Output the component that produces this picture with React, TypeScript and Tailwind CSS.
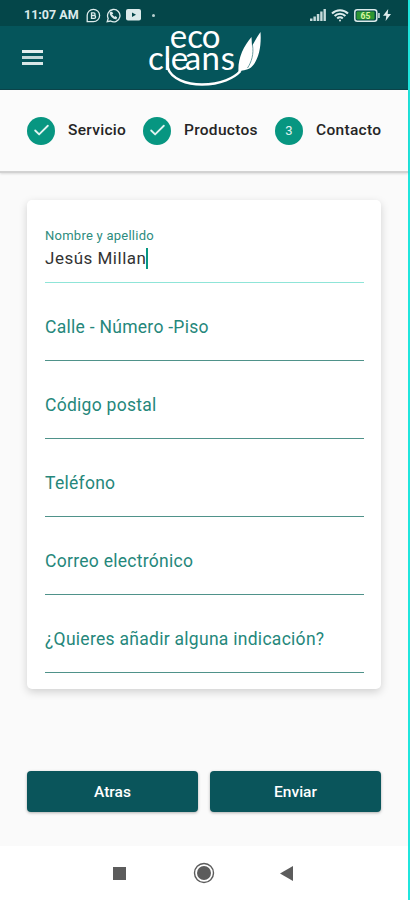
import { Check } from 'lucide-react';

const steps = [
  { label: 'Servicio', done: true, width: 'w-[116px]' },
  { label: 'Productos', done: true, width: 'w-[132px]' },
  { label: 'Contacto', done: false, width: '' },
];

const fields = [
  'Calle - Número -Piso',
  'Código postal',
  'Teléfono',
  'Correo electrónico',
  '¿Quieres añadir alguna indicación?',
];

const StatusBar = () => (
  <div className="flex h-[26px] items-center bg-[#044649] pl-6 pr-[17px] pt-1 text-[#dcebeb]">
    <span className="w-[57px] whitespace-nowrap text-[12.5px] font-bold leading-none">11:07 AM</span>
    <svg className="ml-[5px]" width="15" height="15" viewBox="0 0 15 15" fill="none" stroke="currentColor" strokeWidth="1.3">
      <path d="M1.2 13.5V7.5a6.2 6.2 0 1 1 6.2 6.2H1.2z" />
      <path d="M5.5 4.8h2.2a1.3 1.3 0 0 1 0 2.7H5.5zM5.5 7.5h2.7a1.3 1.3 0 0 1 0 2.8H5.5z" />
    </svg>
    <svg className="ml-[5px]" width="15" height="15" viewBox="0 0 15 15" fill="none" stroke="currentColor" strokeWidth="1.3">
      <path d="M1.2 13.7l1-3.3A6.2 6.2 0 1 1 4.6 13z" />
      <path d="M5 4.2c-1.2 2 2.8 6.8 5.6 6M5 4.2l1.5 2M10.6 10.2l-1.8-1.5" strokeWidth="2" />
    </svg>
    <svg className="ml-[5px]" width="15" height="12" viewBox="0 0 15 12">
      <rect width="15" height="11.5" rx="2" fill="currentColor" />
      <path d="M6 3.5v4.5l4-2.2z" fill="#044649" />
    </svg>
    <span className="ml-[11px] size-[3px] rounded-full bg-[#b8d0d0]" />
    <svg className="ml-auto" width="17" height="12" viewBox="0 0 17 12" fill="currentColor">
      <path d="M0 9.5h2.5V12H0zM3.4 7.5h2.5V12H3.4zM6.8 5h2.5v7H6.8zM10.2 2.5h2.4V12h-2.4zM13.5 0h2.4v12h-2.4z" opacity=".9" />
    </svg>
    <svg className="ml-1" width="18" height="13" viewBox="0 0 18 13" fill="none" stroke="currentColor" strokeWidth="2.1">
      <path d="M1 4.5a11.5 11.5 0 0 1 16 0M3.6 7a7.7 7.7 0 0 1 10.8 0M6.2 9.5a4 4 0 0 1 5.6 0" />
      <circle cx="9" cy="11.5" r="1" fill="currentColor" stroke="none" />
    </svg>
    <svg className="ml-[5px]" width="26" height="13" viewBox="0 0 26 13">
      <rect x=".8" y=".8" width="22" height="11.4" rx="2.5" fill="none" stroke="currentColor" strokeWidth="1.5" />
      <rect x="2.5" y="2.5" width="18" height="8" rx="1" fill="#2d9632" />
      <path d="M24.2 4h1.5v5h-1.5z" fill="currentColor" />
      <text x="11.5" y="9.6" textAnchor="middle" fontSize="8.5" fontWeight="700" fill="#d6f5a5">65</text>
    </svg>
    <svg className="ml-[3px]" width="8" height="12" viewBox="0 0 8 12" fill="currentColor">
      <path d="M5.2 0L0 6.8h3.3L2.6 12 8 5H4.7z" />
    </svg>
  </div>
);

const Logo = () => (
  <svg className="overflow-visible" width="118" height="64" viewBox="147 26 118 64" fill="none" stroke="white">
    <g fill="white" stroke="none" className="font-[Lato,sans-serif]">
      <text x="169.8 187.3 201.8" y="47.7" fontSize="33">eco</text>
      <text x="148 163.5 170.7 184.7 201.5 220.8" y="69.7" fontSize="33">cleans</text>
    </g>
    <path d="M167.7 58v9.5C171 79 187 84.5 202 84.5C221 84.5 234 78 240.5 71" strokeWidth="2.5" />
    {/* leaf */}
    <path d="M238.5 72.5C237.5 59 243 47 251.5 37L252 46C255 41 257.5 36 260.5 32C261.5 46 259 60 251 67.5C247 71 241 69.5 238.5 72.5z" fill="white" stroke="none" />
    <path d="M252.5 45C254 54 251.5 62 247.5 68" stroke="#5d9396" strokeWidth=".9" />
  </svg>
);

const Header = () => (
  <header className="flex h-16 items-center border-b border-[#0c444a] bg-[#05555b] pl-[22px]">
    <div className="flex w-[21px] flex-col gap-[3px]">
      <span className="h-[3px] bg-[#e4eeee]" />
      <span className="h-[3px] bg-[#c4d8d9]" />
      <span className="h-[3px] bg-[#d9e7e7]" />
    </div>
    <div className="ml-[104px] self-start">
      <Logo />
    </div>
  </header>
);

export default function App() {
  return (
    <div className="flex h-[900px] w-[410px] flex-col border-r-2 border-[#20e5dd] bg-[#fafafa] font-[Roboto,sans-serif]">
      <StatusBar />
      <Header />

      <nav className="flex h-[83px] shrink-0 items-center border-b-2 border-[#d2d2d2] bg-[#fbfbfb] pl-[27px] shadow-[0_1px_2px_rgba(0,0,0,0.12)]">
        {steps.map((step) => (
          <div key={step.label} className={`flex shrink-0 items-center ${step.width}`}>
            <span className="flex size-7 shrink-0 items-center justify-center rounded-full bg-[#079681] text-[13px] text-[#e0f3f0]">
              {step.done ? <Check size={19} strokeWidth={2.3} /> : '3'}
            </span>
            <span className="ml-[13px] pt-px text-[15.5px] font-medium tracking-[0.3px] text-[#252525]">{step.label}</span>
          </div>
        ))}
      </nav>

      <main className="flex flex-1 flex-col px-[27px] pt-[27px]">
        <form className="flex h-[489px] w-[354px] flex-col rounded-[5px] bg-white px-[18px] shadow-[0_3px_8px_rgba(0,0,0,0.17)]">
          <div className="flex h-[83px] flex-col pt-[28px]">
            <span className="text-[13px] leading-[16px] tracking-[0.25px] text-[#2d8c7e]">Nombre y apellido</span>
            <div className="mt-[3px] flex h-[23px] items-center">
              <span className="text-[17px] tracking-[0.5px] text-[#333]">Jesús Millan</span>
              <span className="h-[21px] w-[2px] bg-[#079681]" />
            </div>
            <span className="mt-auto h-px w-[319px] bg-[#8fe5d8]" />
          </div>
          {fields.map((label) => (
            <div key={label} className="flex h-[78px] flex-col pt-[32px]">
              <span className="whitespace-nowrap text-[17.5px] leading-6 tracking-[0.28px] text-[#25877b]">{label}</span>
              <span className="mt-auto h-px w-[319px] bg-[#4f928a]" />
            </div>
          ))}
        </form>

        <div className="mt-[82px] flex gap-3 text-[15.5px] font-medium text-white">
          <button className="h-[41px] w-[171px] rounded-[4px] bg-[#0a555b] pt-0.5 shadow-[0_1px_3px_rgba(0,0,0,0.3)]">Atras</button>
          <button className="h-[41px] w-[171px] rounded-[4px] bg-[#0a555b] pt-0.5 shadow-[0_1px_3px_rgba(0,0,0,0.3)]">Enviar</button>
        </div>
      </main>

      <footer className="flex h-[54px] items-center bg-white pl-[113px] text-[#5c5c5c]">
        <span className="size-[13px] bg-current" />
        <svg className="ml-[67px]" width="22" height="22" viewBox="0 0 22 22">
          <circle cx="11" cy="11" r="9.5" fill="none" stroke="currentColor" strokeWidth="1.4" />
          <circle cx="11" cy="11" r="7" fill="currentColor" />
        </svg>
        <svg className="ml-[65px]" width="13" height="15" viewBox="0 0 13 15" fill="currentColor">
          <path d="M13 0v15L0 7.5z" />
        </svg>
      </footer>
    </div>
  );
}
